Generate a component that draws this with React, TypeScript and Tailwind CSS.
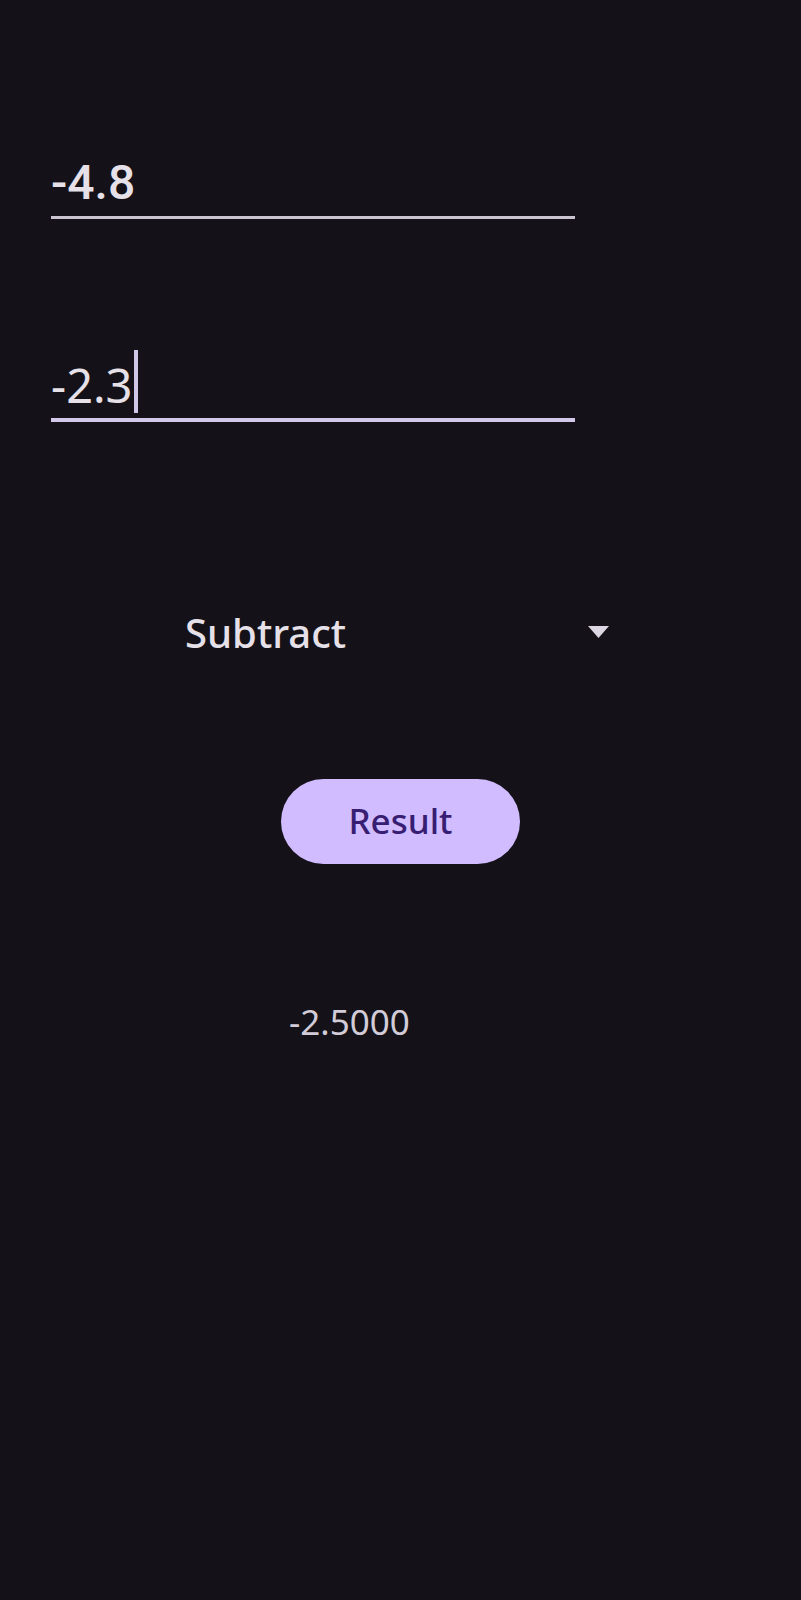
import React from 'react';

export default function App() {
  return (
    <div className="min-h-[1600px] w-full bg-[#141218] flex flex-col pt-[155px]">
      {/* first operand */}
      <div className="ml-[51px] w-[524px] flex flex-col">
        <span className="text-[48px] leading-[56px] font-medium text-[#e6e0e9] font-['Roboto',sans-serif]">-4.8</span>
        <div className="mt-[5px] h-[3px] bg-[#c9c4cf]" />
      </div>

      {/* second operand (focused) */}
      <div className="ml-[51px] mt-[131px] w-[524px] flex flex-col">
        <div className="flex items-end h-[63px]">
          <span className="text-[47px] leading-[56px] text-[#e6e0e9] font-['Noto_Sans',sans-serif]">-2.3</span>
          <span className="ml-[1px] w-[4px] h-[63px] bg-[#cfc6e8]" />
        </div>
        <div className="mt-[5px] h-[4px] bg-[#d2c8ea]" />
      </div>

      {/* operation dropdown */}
      <div className="ml-[185px] mt-[183px] w-[424px] flex items-center justify-between">
        <span className="text-[40px] leading-[56px] font-medium text-[#e6e0e9] font-['Noto_Sans',sans-serif]">Subtract</span>
        <svg width="21" height="12" viewBox="0 0 21 12" className="mt-[-2px]">
          <path d="M0 0 L21 0 L10.5 12 Z" fill="#dcd6e2" />
        </svg>
      </div>

      {/* action */}
      <div className="mt-[118px] flex justify-center">
        <button className="w-[239px] h-[85px] rounded-full bg-[#d0bcff] text-[#381e72] text-[35px] font-medium font-['Noto_Sans',sans-serif] flex items-center justify-center">
          Result
        </button>
      </div>

      <span className="ml-[289px] mt-[134px] text-[35px] leading-[48px] text-[#d2ccd8] font-['Noto_Sans',sans-serif]">
        -2.5000
      </span>
    </div>
  );
}
